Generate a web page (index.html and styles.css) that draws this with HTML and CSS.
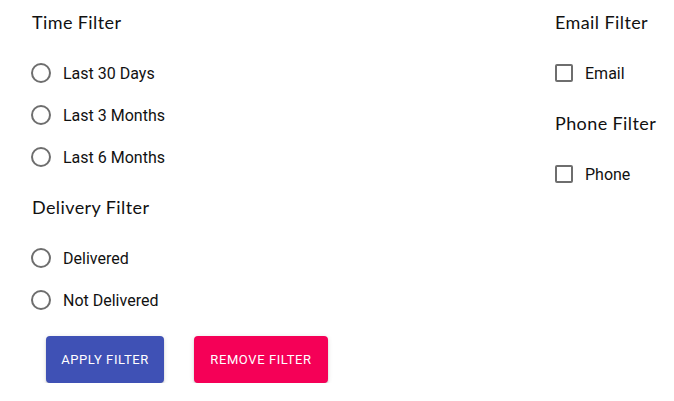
FILE: index.html
```html
<!DOCTYPE html>
<html lang="en">
<head>
    <meta charset="UTF-8">
    <meta name="viewport" content="width=device-width, initial-scale=1.0">
    <title>Filters</title>
    <link rel="stylesheet" href="styles.css">
</head>
<body>
    <div class="filters">
        <div class="column">
            <h3 class="title">Time Filter</h3>
            <label class="option"><span class="radio"></span>Last 30 Days</label>
            <label class="option"><span class="radio"></span>Last 3 Months</label>
            <label class="option"><span class="radio"></span>Last 6 Months</label>

            <h3 class="title">Delivery Filter</h3>
            <label class="option"><span class="radio"></span>Delivered</label>
            <label class="option"><span class="radio"></span>Not Delivered</label>

            <div class="actions">
                <button class="btn btn-apply">Apply Filter</button>
                <button class="btn btn-remove">Remove Filter</button>
            </div>
        </div>
        <div class="column side">
            <h3 class="title">Email Filter</h3>
            <label class="option check"><span class="box"></span>Email</label>

            <h3 class="title">Phone Filter</h3>
            <label class="option check"><span class="box"></span>Phone</label>
        </div>
    </div>
</body>
</html>
```

FILE: styles.css
```css
body {
    margin: 0;
    background: #fff;
    color: #111;
    font-family: Roboto, "Liberation Sans", sans-serif;
}
.filters {
    display: flex;
    padding: 10px 0 0 32px;
}
.column {
    flex: 1;
}
.column.side {
    flex: 0 0 119px;
}
.title {
    margin: 0;
    height: 24px;
    line-height: 24px;
    font-family: Lato, "Open Sans", sans-serif;
    font-size: 18px;
    font-weight: 400;
    letter-spacing: 0.4px;
    color: #111;
    margin-bottom: 18px;
}
.option + .title {
    margin-top: 17px;
}
.option {
    display: flex;
    align-items: center;
    height: 42px;
    font-size: 16px;
}
.radio {
    width: 16px;
    height: 16px;
    border: 2px solid #6e6e6e;
    border-radius: 50%;
    margin: 0 12px 0 -1px;
}
.box {
    width: 14px;
    height: 14px;
    border: 2px solid #6e6e6e;
    border-radius: 2px;
    margin: 0 12px 0 0;
}
.actions {
    display: flex;
    gap: 30px;
    margin: 15px 0 0 14px;
}
.btn {
    border: none;
    border-radius: 4px;
    color: #fff;
    font-family: Roboto, "Liberation Sans", sans-serif;
    font-size: 13px;
    font-weight: 400;
    letter-spacing: 0.6px;
    text-transform: uppercase;
    padding: 16px 0;
    line-height: 15px;
    text-align: center;
    box-shadow: 0 3px 1px -2px rgba(0,0,0,0.2), 0 2px 2px 0 rgba(0,0,0,0.14), 0 1px 5px 0 rgba(0,0,0,0.12);
    cursor: pointer;
}
.btn-apply {
    width: 118px;
    background: #3f51b5;
}
.btn-remove {
    width: 134px;
    background: #f50057;
}
```
